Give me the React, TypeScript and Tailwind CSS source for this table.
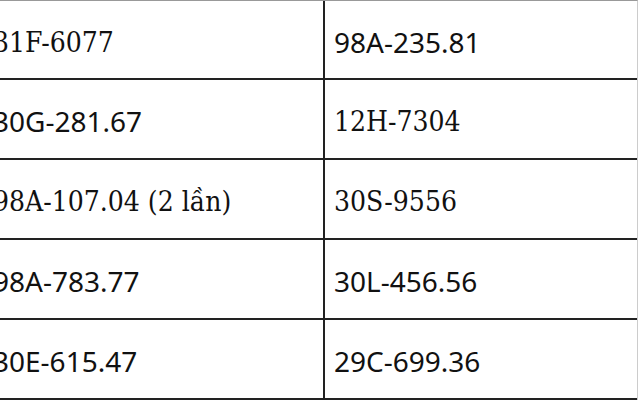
import React from "react";

type Cell = { text: string; serif: boolean };

const rows: [Cell, Cell][] = [
  [
    { text: "31F-6077", serif: true },
    { text: "98A-235.81", serif: false },
  ],
  [
    { text: "30G-281.67", serif: false },
    { text: "12H-7304", serif: true },
  ],
  [
    { text: "98A-107.04 (2 lần)", serif: true },
    { text: "30S-9556", serif: true },
  ],
  [
    { text: "98A-783.77", serif: false },
    { text: "30L-456.56", serif: false },
  ],
  [
    { text: "30E-615.47", serif: false },
    { text: "29C-699.36", serif: false },
  ],
];

function CellView({ cell, left }: { cell: Cell; left: boolean }) {
  return (
    <div
      className={
        "flex h-full items-center pl-[9px] text-[#111] whitespace-nowrap " +
        (left ? "border-r-2 border-[#222]" : "") +
        (cell.serif
          ? " pt-[6px] font-['DejaVu_Serif_Condensed','DejaVu_Serif',serif] text-[28px]"
          : " pt-[4px] font-['Noto_Sans',sans-serif] text-[28px]")
      }
    >
      {cell.text}
    </div>
  );
}

export default function App() {
  return (
    <div className="h-[400px] w-[640px] overflow-hidden bg-white">
      <div className="ml-[-16px] w-[654px] border-t border-r border-t-[#999] border-r-[#ccc]">
        {rows.map((r, i) => (
          <div
            key={i}
            className={
              "grid grid-cols-[341px_1fr] border-b-2 border-[#222] " +
              (i === 0 ? "h-[79px]" : "h-[80px]")
            }
          >
            <CellView cell={r[0]} left />
            <CellView cell={r[1]} left={false} />
          </div>
        ))}
      </div>
    </div>
  );
}
